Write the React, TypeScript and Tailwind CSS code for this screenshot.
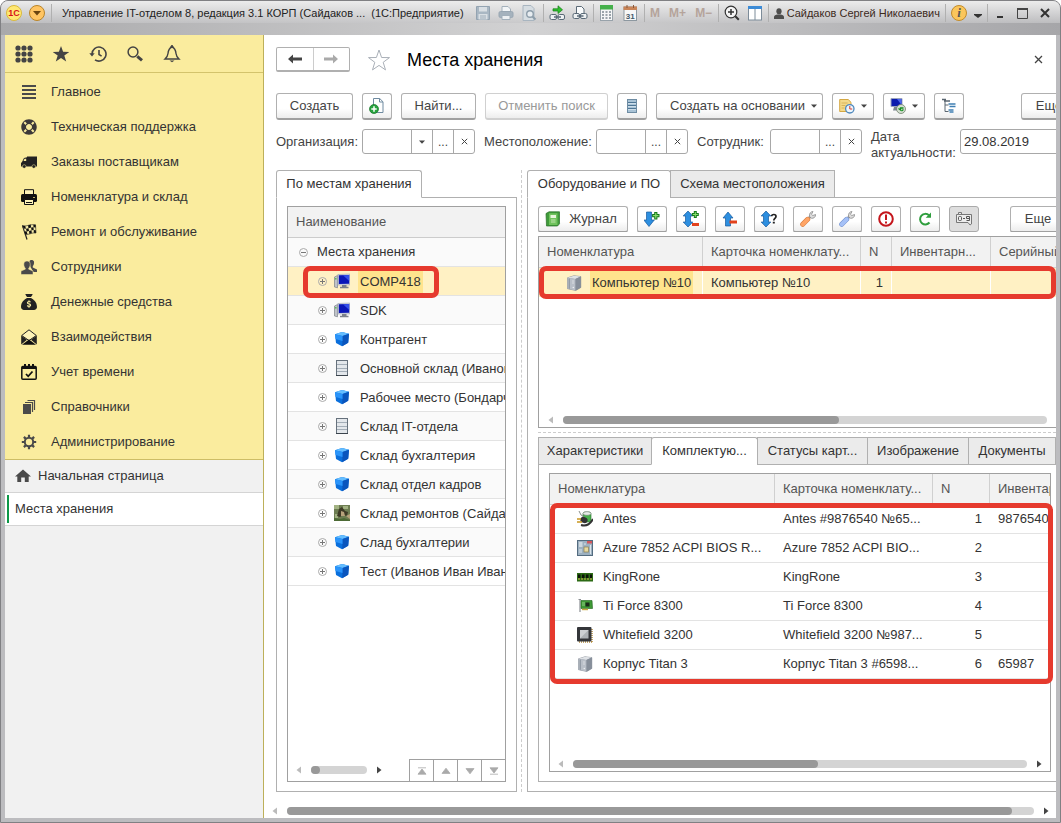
import React from "react";
import { FaLifeRing } from "react-icons/fa";
import { FaSackDollar } from "react-icons/fa6";

type Kids = { children?: React.ReactNode };

function Svg({ children, size = 16 }: Kids & { size?: number }) {
  return (
    <svg width={size} height={size} viewBox="0 0 16 16" fill="none" aria-hidden="true" className="shrink-0">
      {children}
    </svg>
  );
}

/* ---------- sidebar icons ---------- */

const GridIcon = () => (
  <svg width="18" height="18" viewBox="0 0 18 18" fill="#444" aria-hidden="true">
    {[3, 9, 15].map((y) => [3, 9, 15].map((x) => <circle key={`${x}-${y}`} cx={x} cy={y} r="2.6" />))}
  </svg>
);
const StarIcon = () => (
  <svg width="18" height="18" viewBox="0 0 18 18" fill="#444" aria-hidden="true">
    <path d="M9 1l2.1 5.8 6.2.1-5 3.7 1.9 6L9 13l-5.2 3.6 1.9-6-5-3.7 6.2-.1z" />
  </svg>
);
const HistoryIcon = () => (
  <svg width="18" height="18" viewBox="0 0 18 18" fill="none" stroke="#444" strokeWidth="1.6" aria-hidden="true">
    <path d="M3 9a7 7 0 1 1 3 5.8" />
    <path d="M.3 8.2h5.4L3 11.6z" fill="#444" stroke="none" />
    <path d="M10 5v4.5l2.6 1.6" />
  </svg>
);
const SearchIcon = () => (
  <svg width="18" height="18" viewBox="0 0 18 18" fill="none" stroke="#444" aria-hidden="true">
    <circle cx="7" cy="7" r="4.9" strokeWidth="1.5" />
    <path d="M11.3 11.3l4.7 4" strokeWidth="3" />
  </svg>
);
const BellIcon = () => (
  <svg width="18" height="18" viewBox="0 0 18 18" fill="none" stroke="#444" strokeWidth="1.4" aria-hidden="true">
    <path d="M9 2c-3 1-3.7 3.5-4 6.500-.2 2.500-1.200 3.800-3 5.500h14c-1.800-1.700-2.800-3-3-5.500-.3-3-1-5.500-4-6.500z" />
    <path d="M8 2l1-1.500L10 2z" fill="#444" />
    <path d="M6.500 15.500h5L9 17.300z" fill="#444" stroke="none" />
  </svg>
);

const MenuIcon = () => (
  <Svg>
    <path d="M1 2h14M1 6h14M1 10h14M1 14h14" stroke="#4a4a4a" strokeWidth="1.800" />
  </Svg>
);
const VanIcon = () => (
  <Svg>
    <path d="M6 2.500h10V12.500H0V9l1-1L3 4l3-.8z" fill="#222" />
    <path d="M3.500 4.800H5.200v2.200H2.500z" fill="#faec9e" />
    <circle cx="3.200" cy="12.500" r="1.800" fill="#222" stroke="#faec9e" strokeWidth=".5" />
    <circle cx="12.800" cy="12.500" r="1.800" fill="#222" stroke="#faec9e" strokeWidth=".5" />
  </Svg>
);
const PrinterIcon = () => (
  <Svg>
    <path d="M3.500 6V.7h9V6" fill="#fdf3b8" stroke="#111" />
    <rect x="0" y="5" width="16" height="8" rx="1.500" fill="#111" />
    <path d="M3.500 10.500h9v5h-9z" fill="#fdf3b8" stroke="#111" />
    <path d="M5 13.500h6" stroke="#111" />
    <path d="M12 8.500h2" stroke="#bfb06a" />
  </Svg>
);
const FlagIcon = () => (
  <Svg>
    <path d="M1.500 1.500L6 15.500" stroke="#222" strokeWidth="1.200" />
    <path d="M1.500 1.500C5 3 8 0 14.500.8L15 9c-4-1-7 2.500-10.500 1z" fill="#f6eba6" stroke="#222" strokeWidth=".6" />
    <path d="M1.700 1.700l2.500.3.8 2.700-2.400-.3zM7 1.500l2.700-.9.4 2.800-2.600.9zM12.300.7h2.300l.1 2.700-2.200-.1zM5 4.700l2.500-.4.5 2.700-2.300.6zM10.100 3.400l2.400-.1.200 2.800-2.200.2zM3.400 7.200l2.300.4.8 2.800-2.200-.2zM8 7l2.500-.7.3 2.700-2.400.9zM12.700 6.100l2.100.1.200 2.700-2.200-.2z" fill="#111" />
  </Svg>
);
const PeopleIcon = () => (
  <Svg>
    <path d="M8.500 2C9 .5 12.500.4 13 2.500c.2 2-.2 3.500-1.200 4.500v1.500l4.200 2V13h-3.500l-3-5z" fill="#4a4a4a" />
    <path d="M2.800 5C2.800 1 9.200 1 9.200 5c0 2-.7 3.500-1.500 4.300v.9L12 12v3.500H0V12l4.300-1.800v-.9C3.500 8.500 2.800 7 2.800 5z" fill="#4a4a4a" stroke="#faec9e" strokeWidth=".5" />
  </Svg>
);
const MailIcon = () => (
  <Svg>
    <path d="M.7 6.500L8 .8l7.300 5.700L8 11.500z" fill="#fdf3b8" stroke="#222" />
    <path d="M.2 6.500v9L6 10.800zM15.800 6.500v9L10 10.800z" fill="#222" />
    <path d="M1 15.800L8 10.600l7 5.200z" fill="#111" />
  </Svg>
);
const CalendarIcon = () => (
  <Svg>
    <rect x=".8" y="2.500" width="14.400" height="12.700" rx="1" stroke="#111" strokeWidth="1.500" />
    <path d="M1 2h14v3H1z" fill="#111" />
    <path d="M4 0v3.500M8 0v2M12 0v3.500" stroke="#111" strokeWidth="2" />
    <path d="M5 10l2.200 2.300L11.500 7.500" stroke="#111" strokeWidth="1.800" />
  </Svg>
);
const BooksIcon = () => (
  <Svg>
    <rect x="2" y="5" width="8" height="10" fill="#4a4a4a" />
    <path d="M4 3.500h7.500V13M6.500 1.500h7V11" stroke="#4a4a4a" strokeWidth="1.200" />
  </Svg>
);
const GearIcon = () => (
  <Svg>
    <circle cx="8" cy="8" r="4.200" stroke="#4a4a4a" strokeWidth="2" />
    <path d="M8 .8v3M8 12.200v3M.8 8h3M12.200 8h3M2.900 2.900l2.200 2.200M10.900 10.900l2.200 2.200M2.900 13.100l2.200-2.200M10.900 5.100l2.200-2.200" stroke="#4a4a4a" strokeWidth="2.200" />
  </Svg>
);
const HomeIcon = () => (
  <Svg>
    <path d="M8 1.500L16 8.500h-2.300V14H9.800V9.500H6.200V14H2.300V8.500H0z" fill="#4a4a4a" />
  </Svg>
);

/* ---------- content icons ---------- */

const ComputerIcon = () => (
  <Svg>
    <path d="M.5 4L3.500 2.500v12.300L.5 14z" fill="#bfc3c9" stroke="#7d828a" strokeWidth=".7" />
    <rect x="1.200" y="5" width="1.200" height="1.500" fill="#3fbf3f" />
    <path d="M3.800 1.500L15.800 1v11L3.800 12z" fill="#d5d9e2" stroke="#8e95a5" strokeWidth=".5" />
    <path d="M4.800 2.300L15.200 2v8.700L4.800 11z" fill="#0a16b8" />
    <path d="M9 2.200L15.200 2v6z" fill="#3450ea" />
    <path d="M8 12h4.500v1.700h2v1.600H6v-1.600h2z" fill="#7b808b" />
  </Svg>
);
const BoxIcon = () => (
  <Svg>
    <path d="M1 3.200L8 1l7 1.800-.8 9L8 15.300 2 12z" fill="#0a6fdc" />
    <path d="M1 3.200L8 1l7 1.800L8.500 5z" fill="#64bdff" />
    <path d="M8.500 5L15 2.800l-.8 9L8.300 15.200z" fill="#0a55bd" />
    <path d="M1 3.200L8.500 5v5L1.600 8z" fill="#2a94fa" />
  </Svg>
);
const ShelfIcon = () => (
  <Svg>
    <rect x="2.500" y=".5" width="11" height="15" fill="#e3e7eb" stroke="#66717c" />
    <path d="M3 4.500h10M3 8.500h10M3 11.500h10" stroke="#a3adb7" />
    <path d="M2 15.500h12" stroke="#3b444d" />
  </Svg>
);
const PhotoIcon = () => (
  <Svg>
    <rect width="16" height="16" fill="#6d7d52" />
    <path d="M0 0h5v4H0zM9 1h5v3H9zM1 9h3v4H1z" fill="#a2b283" />
    <path d="M5 4l3-2 3 4 3 1-1 4-4-1-3 2-3-1z" fill="#3d3a26" />
    <path d="M7 6l3 1 1 4H7zM12 11l4-2v5z" fill="#b7a27c" />
    <path d="M0 13l6 1 4-1 6 2v1H0z" fill="#4c6a35" />
  </Svg>
);
const CaseIcon = () => (
  <Svg>
    <path d="M1.500 2.800L8 .7l6.800.9V12.500l-5 3-8.300-1.800z" fill="#8f97a2" stroke="#6f7783" strokeWidth=".5" />
    <path d="M1.500 2.800L8 .7l6.800.9L9.300 4z" fill="#dfe2e6" />
    <path d="M9.300 4l5.500-2.400v10.900l-5.500 3z" fill="#868e9a" />
    <path d="M1.500 2.800L9.300 4v11.500l-7.800-1.800z" fill="#b9bfc8" />
    <path d="M3.200 3.500v10.300" stroke="#7d8592" strokeWidth=".9" />
    <path d="M6 6h2M6 8h2" stroke="#e8eaed" strokeWidth=".7" />
    <circle cx="7.300" cy="12.500" r=".8" fill="#eef0f2" />
  </Svg>
);
const PowerIcon = () => (
  <Svg>
    <rect x="6" y="1" width="8" height="10" rx="2" fill="#49b34c" stroke="#276a2a" strokeWidth=".6" />
    <ellipse cx="10" cy="2.500" rx="4" ry="1.800" fill="#e6ebe6" stroke="#6c716c" strokeWidth=".5" />
    <path d="M2 0l2 4 3 1.500" stroke="#8a8f8a" strokeWidth="1" />
    <ellipse cx="7" cy="9" rx="3.700" ry="3" fill="#333" transform="rotate(20 7 9)" />
    <path d="M0 8h4M0 11h5" stroke="#c9971f" strokeWidth="1.300" />
    <path d="M4 14c5 1.500 9-.5 12-6" stroke="#333" strokeWidth="2" />
  </Svg>
);
const BoardIcon = () => (
  <Svg>
    <rect x=".5" y=".5" width="15" height="15" fill="#9db1c1" stroke="#546c80" />
    <rect x="2" y="2" width="3.500" height="5" fill="#cdd8e0" />
    <rect x="10" y="1" width="5" height="2.500" fill="#d3575c" />
    <rect x="7" y="7" width="4.500" height="5" fill="#e7d9a0" stroke="#8b7d4d" strokeWidth=".7" />
    <path d="M2 10h3M2 12h3M13.500 5v9M8 3v2" stroke="#dbe4ea" />
  </Svg>
);
const RamIcon = () => (
  <Svg>
    <rect y="4" width="16" height="8.500" fill="#2c6a15" />
    <path d="M1 5.500h2.500V9H1zM5 5.500h2.500V9H5zM9 5.500h2.500V9H9zM13 5.500h2V9h-2z" fill="#0c1408" />
    <path d="M1 10h14" stroke="#d7bd52" strokeDasharray="2 1" />
  </Svg>
);
const CardIcon = () => (
  <Svg>
    <path d="M3 1v13M1.500 1.500H4" stroke="#8b8f94" strokeWidth="1.200" />
    <path d="M4 2.500h11l.5 8H4z" fill="#3f9a35" stroke="#1f611c" strokeWidth=".6" />
    <rect x="8.500" y="4.500" width="4" height="4" fill="#1b2b1a" />
    <path d="M5 10.700h6V12.200H5z" fill="#c5a63c" />
    <path d="M5 5h3M5 7h3" stroke="#8fd085" />
  </Svg>
);
const CpuIcon = () => (
  <Svg>
    <path d="M15 2v13M2 15h13" stroke="#b28a3a" strokeWidth="1.500" strokeDasharray="1 1" />
    <rect x="0" y="0" width="14.500" height="14.500" rx="1" fill="#34363a" />
    <rect x="3" y="3" width="8.500" height="8.500" fill="#aeb2b6" />
    <path d="M3 3h8.500L3 11.500z" fill="#cdd0d3" />
  </Svg>
);

const NewDocIcon = () => (
  <Svg>
    <path d="M4.500.5h6.200l3.300 3.300V14.500H4.500z" fill="#fdfefe" stroke="#6f8aa0" />
    <path d="M10.500.5V4H14" stroke="#6f8aa0" />
    <circle cx="5" cy="11" r="4.500" fill="#27a33f" stroke="#147326" strokeWidth=".7" />
    <path d="M5 8.300v5.400M2.300 11h5.400" stroke="#fff" strokeWidth="1.500" />
  </Svg>
);
const ListIcon = () => (
  <Svg>
    <rect x="3.500" y="1.500" width="9" height="13" fill="#a9c3d6" stroke="#6e8ca3" />
    <path d="M4 4.500h8M4 7.500h8M4 10.500h8" stroke="#4f7796" strokeWidth="1" />
    <path d="M4 5.500h8M4 8.500h8M4 11.500h8" stroke="#dce9f2" strokeWidth=".7" />
  </Svg>
);
const DocClockIcon = () => (
  <Svg>
    <path d="M.7 1.500h8.500L12 4.300v9.200H.7z" fill="#f4d98b" stroke="#d4a844" />
    <path d="M2.500 5h6M2.500 7.500h4M2.500 10h3" stroke="#d8b45a" />
    <circle cx="10.800" cy="10.800" r="4.200" fill="#eef6fc" stroke="#4e88bd" strokeWidth="1.300" />
    <path d="M10.800 8v3h2.400" stroke="#d63a2d" />
  </Svg>
);
const PcSyncIcon = () => (
  <Svg>
    <path d="M1 .5h11v8H1z" fill="#0c1cae" stroke="#9aa3bd" />
    <path d="M7 1h4.500v6z" fill="#4c66ee" />
    <path d="M4 9h5l1 3.500H3z" fill="#7d8591" />
    <circle cx="11" cy="11" r="4.500" fill="#d5dfd2" stroke="#71806d" strokeWidth=".8" />
    <path d="M8.500 10.500l2 1.500v-2h3M13.500 11.500l-2 1.500" stroke="#159020" strokeWidth="1.300" />
  </Svg>
);
const TreeIcon = () => (
  <Svg>
    <path d="M4 3v10.500h3.500M4 7h3.500" stroke="#5a6670" />
    <path d="M1 1.500h4M3 3h6" stroke="#5a6670" strokeWidth="1.500" />
    <path d="M7.500 6h7M8.500 8.500h6M7.500 12h5M8.500 14h4" stroke="#3f7fb3" strokeWidth="1.600" />
  </Svg>
);
const JournalIcon = () => (
  <Svg>
    <path d="M1 2.500L4 .8h10.500v12L12.500 15H1.500z" fill="#3f9b3a" stroke="#2a6f28" strokeWidth=".7" />
    <path d="M4 2.300h8.500V14H4z" fill="#6fc25c" />
    <path d="M5.500 4h5.500v3H5.500z" fill="#e9f5dd" />
    <path d="M6 9h4.500M6 11h4.500" stroke="#c3e5b0" />
  </Svg>
);
const BLUE = "#2d8fe0";
const AddDownIcon = () => (
  <Svg>
    <path d="M2.500 1h5v8h2.800L5 15.500-.2 9h2.700z" fill={BLUE} stroke="#17599c" strokeWidth=".7" />
    <path d="M11.800 1v7.400M8.100 4.700h7.400" stroke="#157a1b" strokeWidth="3.200" />
    <path d="M11.800 2v5.400M9.100 4.700h5.400" stroke="#8be06f" strokeWidth="1.200" />
  </Svg>
);
const UpDown = () => <path d="M5 0l4.800 5H7.500v6h2.300L5 16 .2 11h2.300V5H.2z" fill={BLUE} stroke="#17599c" strokeWidth=".7" />;
const AddRemoveIcon = () => (
  <Svg>
    <UpDown />
    <path d="M12.300 0v7M8.800 3.500h7" stroke="#157a1b" strokeWidth="3" />
    <path d="M12.300 1v5M9.800 3.500h5" stroke="#8be06f" />
    <path d="M9 13.500h7" stroke="#e2421d" strokeWidth="3" />
  </Svg>
);
const RemoveUpIcon = () => (
  <Svg>
    <path d="M6 1l5 6H8.500v8h-5V7H1z" fill={BLUE} stroke="#17599c" strokeWidth=".7" />
    <path d="M7.500 11h7.500" stroke="#e2421d" strokeWidth="3.200" />
  </Svg>
);
const QuestionIcon = () => (
  <Svg>
    <UpDown />
    <path d="M10.700 5.200c0-2.300 4.300-2.300 4.300.2 0 2-2.200 1.800-2.200 4" stroke="#222" strokeWidth="1.700" />
    <path d="M11.800 10.800h2v1.800h-2z" fill="#222" />
  </Svg>
);
const Wrench = ({ color, edge }: { color: string; edge: string }) => (
  <Svg>
    <path d="M7 9l4-4" stroke="#999" strokeWidth="2.500" />
    <path d="M9.500 5.500C9 3 10.500.5 13 .5l-1.500 2.800 1.300 1.200 2.800-1c.2 2.500-2 4.300-4.300 3.700z" fill="#dcdcdc" stroke="#8b8b8b" strokeWidth=".8" />
    <path d="M2.700 13.300l5-5" stroke={edge} strokeWidth="5" strokeLinecap="round" />
    <path d="M2.700 13.300l5-5" stroke={color} strokeWidth="3.800" strokeLinecap="round" />
  </Svg>
);
const AlertIcon = () => (
  <Svg>
    <circle cx="8" cy="8" r="6.800" fill="#fff" stroke="#c4161c" strokeWidth="2" />
    <path d="M8 3.500v5.500M8 10.500v2" stroke="#c4161c" strokeWidth="2" />
  </Svg>
);
const RefreshIcon = () => (
  <Svg>
    <path d="M12.500 11.500A5.300 5.300 0 1 1 12 4.300" stroke="#2e9e3d" strokeWidth="2" />
    <path d="M14 1.500v5.300H8.700z" fill="#2e9e3d" />
  </Svg>
);
const NumbersIcon = () => (
  <svg width="18" height="16" viewBox="0 0 18 16" fill="none" aria-hidden="true">
    <path d="M3.500 3.500v-2h3v2M3.500 3.500h-2v8h11.500l2 2.500 1.500-1V3.500z" fill="#ececec" stroke="#777" />
    <rect x="3.500" y="5.500" width="3" height="4" rx="1" stroke="#555" />
    <path d="M8 7.500h2M14.500 7.500h-3v-2h3v4h-3" stroke="#555" />
  </svg>
);

/* ---------- title bar icons ---------- */

const SaveIcon = () => (
  <Svg>
    <path d="M1.500 1.500h13v13h-13z" fill="#a9b7c3" stroke="#93a3b1" />
    <path d="M4 2h8v4.500H4zM3.500 9h9v5.500h-9z" fill="#d9dfe4" />
    <path d="M5 11h6M5 13h6" stroke="#9fadb9" />
  </Svg>
);
const PrintSmall = ({ on = false }: { on?: boolean }) => (
  <Svg>
    <path d="M4 7V1.500h6L12.500 4v3" fill="#f2f5f7" stroke={on ? "#5c6c79" : "#a3b0bb"} />
    <rect x="1" y="6.500" width="14" height="6" rx="1.500" fill={on ? "#dfe5e9" : "#a5b2bd"} stroke={on ? "#52606b" : "#98a6b2"} />
    <path d="M4 10.500h8v4H4z" fill="#edf0f2" stroke={on ? "#52606b" : "#a3b0bb"} />
  </Svg>
);
const PreviewIcon = () => (
  <Svg>
    <path d="M2 .5h8l3 3v12H2z" fill="#d6dde2" stroke="#a8b5c0" />
    <circle cx="9" cy="9" r="3.300" fill="#e8edf1" stroke="#8d9daa" strokeWidth="1.400" />
    <path d="M11.500 11.500l3 3" stroke="#8d9daa" strokeWidth="2" />
  </Svg>
);
const LinkArrowIcon = () => (
  <Svg>
    <path d="M4 3.800h5V.8l4.500 4L9 8.500V6H4z" fill="#2fc02f" stroke="#157d18" strokeWidth=".7" />
    <rect x="1" y="9.500" width="6.500" height="5" rx="1.500" fill="#eef1f3" stroke="#5a6a77" />
    <rect x="9" y="9.500" width="6.500" height="5" rx="1.500" fill="#eef1f3" stroke="#5a6a77" />
    <path d="M5 12h7" stroke="#5a6a77" strokeWidth="1.300" />
  </Svg>
);
const LinkPageIcon = () => (
  <Svg>
    <path d="M4.500 9V1.500h5l2.500 2.500v5" fill="#fafbfc" stroke="#5a6a77" />
    <rect x="1" y="8.500" width="6.500" height="5" rx="1.500" fill="#eef1f3" stroke="#5a6a77" />
    <rect x="8.500" y="8.500" width="6.500" height="5" rx="1.500" fill="#eef1f3" stroke="#5a6a77" />
    <path d="M5 11h6.500" stroke="#5a6a77" strokeWidth="1.300" />
  </Svg>
);
const CalcIcon = () => (
  <Svg>
    <rect x="2.500" y=".5" width="12" height="15" fill="#f5f6f7" stroke="#98a2aa" />
    <path d="M2 0h13v4.500H2z" fill="#45b04b" />
    <path d="M4 7h9M4 10h9M4 13h9" stroke="#7d8993" strokeWidth="1.700" strokeDasharray="2 1.500" />
  </Svg>
);
const DateIcon = () => (
  <Svg>
    <rect x="2" y="2" width="12.500" height="13.500" fill="#f7f7f7" stroke="#8d98a0" />
    <path d="M1.500 1.500H15V5H1.500z" fill="#c98458" />
    <path d="M5 0v3M11.500 0v3" stroke="#8b5938" />
    <text x="8.200" y="13.500" fontSize="8" fontFamily="Liberation Sans, sans-serif" fontWeight="bold" textAnchor="middle" fill="#44596a">31</text>
  </Svg>
);
const ZoomIcon = () => (
  <Svg>
    <circle cx="7" cy="7" r="5.800" fill="#f5f5f5" stroke="#333" strokeWidth="1.200" />
    <path d="M7 4v6M4 7h6" stroke="#333" strokeWidth="1.500" />
    <path d="M11.300 11.300l3.500 3.500" stroke="#333" strokeWidth="2" />
  </Svg>
);
const PanesIcon = () => (
  <Svg>
    <rect x="1.500" y="1.500" width="13" height="13.500" fill="#fff" stroke="#7d8c99" />
    <path d="M1 1h14v3H1z" fill="#3c8bd6" />
    <path d="M8 4v11" stroke="#7d8c99" />
  </Svg>
);
const UserIcon = () => (
  <svg width="10" height="11" viewBox="0 0 11 12" fill="#4d4d4d" aria-hidden="true">
    <ellipse cx="5.500" cy="3.500" rx="2.900" ry="3.400" />
    <path d="M0 12V9.500c0-1 2-2 3.800-2.300h3.400C9 7.500 11 8.500 11 9.500V12z" />
  </svg>
);

/* ---------- building blocks ---------- */

const BTN =
  "flex h-[27px] shrink-0 items-center justify-center whitespace-nowrap rounded-[3px] border border-[#b0b0b0] border-b-2 border-b-[#a0a0a0] bg-gradient-to-b from-white from-60% to-[#ededed] text-[#444]";

function Button({ children, className, label, disabled }: Kids & { className: string; label?: string; disabled?: boolean }) {
  return (
    <button type="button" aria-label={label} disabled={disabled} className={`${BTN} ${className} disabled:border-[#d0d0d0] disabled:text-[#999]`}>
      {children}
    </button>
  );
}

const Caret = () => (
  <svg width="6" height="4" viewBox="0 0 6 4" className="shrink-0" aria-hidden="true">
    <path d="M0 .5h6L3 3.800z" fill="#444" />
  </svg>
);
const CrossMark = ({ size = 7 }: { size?: number }) => (
  <svg width={size} height={size} viewBox="0 0 7 7" aria-hidden="true">
    <path d="M.8.8l5.400 5.400M6.200.8L.8 6.200" stroke="#444" strokeWidth="1" />
  </svg>
);

function Field({ id, label, labelClass, dropdown }: { id: string; label: string; labelClass: string; dropdown?: boolean }) {
  const cell = "flex w-[21px] items-center justify-center border-l border-[#a8a8a8] text-xs text-[#444]";
  return (
    <div className="flex shrink-0">
      <label htmlFor={id} className={`flex h-[25px] shrink-0 items-center ${labelClass}`}>{label}</label>
      <div className="flex h-[25px] rounded-[3px] border border-[#a8a8a8] bg-white">
        <input id={id} className="w-[48px] bg-transparent px-1 outline-none" />
        {dropdown && <button type="button" aria-label="Открыть список" className={cell}><Caret /></button>}
        <button type="button" aria-label="Выбрать" className={cell}>...</button>
        <button type="button" aria-label="Очистить" className={cell}><CrossMark /></button>
      </div>
    </div>
  );
}

function Tab({ active, className, children }: Kids & { active?: boolean; className: string }) {
  return (
    <button
      type="button"
      role="tab"
      aria-selected={!!active}
      className={`-ml-px h-7 shrink-0 whitespace-nowrap border border-[#b0b0b0] text-[#333] first:ml-0 ${active ? "rounded-t-[3px] border-b-white bg-white" : "bg-[#ebebeb]"} ${className}`}
    >
      {children}
    </button>
  );
}

const ArrowH = ({ right, dark }: { right?: boolean; dark?: boolean }) => (
  <svg width="5" height="8" viewBox="0 0 5 8" className="shrink-0" aria-hidden="true">
    <path d={right ? "M0 .5v7L4.500 4z" : "M5 .5v7L.5 4z"} fill={dark ? "#444" : "#bbb"} />
  </svg>
);

function ScrollBar({ className, thumb, noRight }: { className: string; thumb: string; noRight?: boolean }) {
  return (
    <div className={`flex items-center gap-[10px] ${className}`}>
      <ArrowH />
      <div className="h-2 flex-1 rounded-full bg-[#d4d4d4]">
        <div className={`h-2 rounded-full bg-[#999] ${thumb}`} />
      </div>
      {!noRight && <ArrowH right dark />}
    </div>
  );
}

const Expander = ({ open }: { open?: boolean }) => (
  <svg width="9" height="9" viewBox="0 0 9 9" fill="none" stroke="#aaa" className="shrink-0" aria-hidden="true">
    <circle cx="4.500" cy="4.500" r="4" />
    <path d="M2 4.500h5" stroke="#777" />
    {!open && <path d="M4.500 2v5" stroke="#777" />}
  </svg>
);

const Sep = () => <span className="h-[18px] w-px shrink-0 bg-[#b0b0b0]" />;
const redFrame = "pointer-events-none absolute rounded-[7px] border-[5px] border-[#e63a2e]";

/* ---------- data ---------- */

const menu: [React.ReactNode, string][] = [
  [<MenuIcon />, "Главное"],
  [<FaLifeRing size={16} color="#3c3838" />, "Техническая поддержка"],
  [<VanIcon />, "Заказы поставщикам"],
  [<PrinterIcon />, "Номенклатура и склад"],
  [<FlagIcon />, "Ремонт и обслуживание"],
  [<PeopleIcon />, "Сотрудники"],
  [<FaSackDollar size={16} />, "Денежные средства"],
  [<MailIcon />, "Взаимодействия"],
  [<CalendarIcon />, "Учет времени"],
  [<BooksIcon />, "Справочники"],
  [<GearIcon />, "Администрирование"],
];

const tree: [React.ReactNode, string][] = [
  [<ComputerIcon />, "COMP418"],
  [<ComputerIcon />, "SDK"],
  [<BoxIcon />, "Контрагент"],
  [<ShelfIcon />, "Основной склад (Иванов)"],
  [<BoxIcon />, "Рабочее место (Бондарчук)"],
  [<ShelfIcon />, "Склад IT-отдела"],
  [<BoxIcon />, "Склад бухгалтерия"],
  [<BoxIcon />, "Склад отдел кадров"],
  [<PhotoIcon />, "Склад ремонтов (Сайдаков)"],
  [<BoxIcon />, "Слад бухгалтерии"],
  [<BoxIcon />, "Тест (Иванов Иван Иванович)"],
];

const parts: [React.ReactNode, string, string, string][] = [
  [<PowerIcon />, "Antes", "Antes #9876540 №65...", "9876540"],
  [<BoardIcon />, "Azure 7852 ACPI BIOS R...", "Azure 7852 ACPI BIO...", ""],
  [<RamIcon />, "KingRone", "KingRone", ""],
  [<CardIcon />, "Ti Force 8300", "Ti Force 8300", ""],
  [<CpuIcon />, "Whitefield 3200", "Whitefield 3200 №987...", ""],
  [<CaseIcon />, "Корпус Titan 3", "Корпус Titan 3 #6598...", "65987"],
];

const TH = "h-[31px] overflow-hidden whitespace-nowrap border-b border-r border-[#d0d0d0] bg-[#f2f2f2] px-2 text-left font-normal text-[#555] last:border-r-0";

/* ---------- sections ---------- */

function TitleBar() {
  return (
    <header className="flex h-[34px] shrink-0 items-start bg-gradient-to-r from-[#a9a9ab] via-[#d2d2d3] to-[#a6a6a9]">
      <div className="flex h-[22px] min-w-0 flex-1 items-center bg-gradient-to-b from-[#ececec] to-[#c6c6c8]/70 pl-[5px] pr-[10px] pt-[2px] text-[11px] text-[#222]">
        <span className="flex size-4 shrink-0 items-center justify-center rounded-full border border-[#d9b93c] bg-[#ffe873] text-[9px] font-bold text-[#d8131b]">1C</span>
        <button type="button" aria-label="Главное меню" className="ml-[7px] flex size-4 shrink-0 items-center justify-center rounded-full border border-[#b98428] bg-[#ffc563]">
          <svg width="8" height="5" viewBox="0 0 8 5" aria-hidden="true"><path d="M0 0h8L4 4.500z" fill="#6b4510" /></svg>
        </button>
        <span className="ml-[6px] flex"><Sep /></span>
        <span className="ml-[10px] whitespace-pre">Управление IT-отделом 8, редакция 3.1 КОРП (Сайдаков ...  (1С:Предприятие)</span>
        <div className="ml-auto flex shrink-0 items-center">
          <div className="flex items-center gap-[7px] pr-[6px]"><SaveIcon /><PrintSmall /><PreviewIcon /></div>
          <Sep />
          <div className="flex items-center gap-[7px] px-[5px]"><LinkArrowIcon /><LinkPageIcon /></div>
          <Sep />
          <div className="flex items-center gap-2 pl-1 pr-[6px]"><CalcIcon /><DateIcon /></div>
          <Sep />
          <div className="flex w-[73px] items-center justify-center gap-[9px] text-xs font-bold text-[#b5a49b]"><span>M</span><span>M+</span><span>M−</span></div>
          <Sep />
          <div className="flex items-center gap-[7px] px-[5px]"><ZoomIcon /><PanesIcon /></div>
          <Sep />
          <div className="flex items-center gap-[3px] px-[5px] text-[#3c2a1c]"><UserIcon /><span>Сайдаков Сергей Николаевич</span></div>
          <Sep />
          <div className="flex items-center gap-[7px] px-[5px]">
            <span className="flex size-4 items-center justify-center rounded-full border border-[#c28b2a] bg-[#fbc65b] font-['Liberation_Serif',serif] text-[13px] font-bold italic text-[#555]">i</span>
            <svg width="8" height="12" viewBox="0 0 8 12" aria-hidden="true"><path d="M0 7h8v1L4 11 0 8z" fill="#333" /></svg>
          </div>
          <Sep />
          <div className="flex items-center gap-3 pl-2">
            <svg width="9" height="12" viewBox="0 0 9 12" aria-hidden="true"><path d="M1 10h6" stroke="#333" strokeWidth="2" /></svg>
            <svg width="11" height="11" viewBox="0 0 11 11" fill="none" aria-hidden="true"><path d="M.5 1h10v9.500H.5z" stroke="#444" /><path d="M0 1h11" stroke="#444" strokeWidth="2" /></svg>
            <svg width="10" height="10" viewBox="0 0 10 10" aria-hidden="true"><path d="M1 1l8 8M9 1L1 9" stroke="#333" strokeWidth="2" /></svg>
          </div>
        </div>
      </div>
    </header>
  );
}

function Sidebar() {
  return (
    <aside className="flex w-[259px] shrink-0 flex-col border-r border-[#bdb05a] bg-[#f1f1f1]">
      <div className="flex h-[38px] shrink-0 items-center gap-[19px] border-b border-[#d3c36c] bg-[#faec9e] pl-[10px]">
        <GridIcon /><StarIcon /><HistoryIcon /><SearchIcon /><BellIcon />
      </div>
      <nav className="border-b border-[#cdbd66] bg-[#faec9e] pt-px">
        {menu.map(([icon, text]) => (
          <a key={text} href="#" className="flex h-[35px] items-center text-[#333]">
            <span className="ml-4 flex w-[30px] shrink-0 items-center text-[#222]">{icon}</span>
            {text}
          </a>
        ))}
      </nav>
      <a href="#" className="flex h-[33px] shrink-0 items-center gap-[7px] border-b border-[#d4d4d4] pl-[10px] text-[#333]">
        <HomeIcon />Начальная страница
      </a>
      <a href="#" className="flex h-[33px] shrink-0 items-center border-b border-[#d4d4d4] bg-white pl-[2px] text-[#333]">
        <span className="mr-[6px] h-7 w-[2px] bg-[#0b9747]" />Места хранения
      </a>
    </aside>
  );
}

function TreePanel() {
  const nav = ["M1 1h10M6 2.500L11 9H1z", "M6 1.500L11 8H1z", "M1 2h10L6 8.500z", "M1 1h10L6 7.500zM1 9h10"];
  return (
    <section className="flex w-[241px] shrink-0 flex-col">
      <div role="tablist" className="relative z-10 -mb-px flex">
        <Tab active className="w-[146px]">По местам хранения</Tab>
      </div>
      <div className="flex flex-1 flex-col border border-[#b0b0b0] px-[10px] pb-[9px] pt-2">
        <div className="relative flex flex-1 flex-col border border-[#a0a0a0]">
          <div className="overflow-hidden">
            <div className="flex h-[31px] items-center border-b border-[#ccc] bg-[#f2f2f2] pl-2 text-[#555]">Наименование</div>
            <div className="flex h-[29px] items-center gap-[9px] border-b border-[#e3e3e3] bg-[#fafafa] pl-[11px] text-[#333]">
              <Expander open />Места хранения
            </div>
            {tree.map(([icon, text], i) => (
              <div key={text} className={`flex h-[29px] items-center whitespace-nowrap border-b border-[#e3e3e3] pl-[30px] text-[#333] ${i === 0 ? "bg-[#fff1c4]" : i % 2 ? "bg-[#fafafa]" : "bg-white"}`}>
                <Expander />
                <span className="ml-[7px] mr-2">{icon}</span>
                <span className={`px-[2px] leading-[27px] ${i === 0 ? "bg-[#ffe48d]" : ""}`}>{text}</span>
              </div>
            ))}
          </div>
          <div className="mt-auto flex h-[22px] items-center justify-between">
            <ScrollBar className="ml-2 w-[86px]" thumb="w-[9px]" />
            <div className="flex h-[22px] border-t border-[#a0a0a0]">
              {nav.map((d, i) => (
                <button key={d} type="button" aria-label={`Переход ${i + 1}`} className="flex w-6 items-center justify-center border-l border-[#a0a0a0]">
                  <svg width="10" height="8" viewBox="0 0 12 10" fill="#aaa" stroke="#aaa" aria-hidden="true"><path d={d} /></svg>
                </button>
              ))}
            </div>
          </div>
          <div className={`${redFrame} left-[15px] top-[59px] h-8 w-[136px]`} />
        </div>
      </div>
    </section>
  );
}

function EquipmentTable() {
  const td = "h-[29px] whitespace-nowrap border-r border-white px-2 last:border-r-0";
  return (
    <div className="relative flex h-[192px] shrink-0 flex-col overflow-hidden border border-r-0 border-[#a0a0a0]">
      <table className="w-full table-fixed border-separate border-spacing-0">
        <colgroup><col className="w-[164px]" /><col className="w-[158px]" /><col className="w-[31px]" /><col className="w-[99px]" /><col /></colgroup>
        <thead>
          <tr><th className={TH}>Номенклатура</th><th className={TH}>Карточка номенклату...</th><th className={TH}>N</th><th className={TH}>Инвентарн...</th><th className={TH}>Серийный</th></tr>
        </thead>
        <tbody>
          <tr className="bg-[#fff1c4] text-[#333]">
            <td className={td}>
              <span className="flex items-center gap-2 pl-[19px]"><CaseIcon /><span className="bg-[#ffe48d] px-[2px] leading-[25px]">Компьютер №10</span></span>
            </td>
            <td className={td}>Компьютер №10</td><td className={`${td} text-right`}>1</td><td className={td} /><td className={td} />
          </tr>
        </tbody>
      </table>
      <ScrollBar className="mb-[3px] ml-[9px] mr-[9px] mt-auto" thumb="w-[57%]" noRight />
      <div className={`${redFrame} inset-x-0 top-[29px] h-[33px]`} />
    </div>
  );
}

function PartsTable() {
  const td = "h-[29px] overflow-hidden whitespace-nowrap border-b border-[#e3e3e3] px-2";
  return (
    <div className="relative mr-[5px] flex flex-1 flex-col border border-[#a0a0a0]">
      <table className="w-full table-fixed border-separate border-spacing-0">
        <colgroup><col className="w-[225px]" /><col className="w-[158px]" /><col className="w-[57px]" /><col /></colgroup>
        <thead>
          <tr><th className={TH}>Номенклатура</th><th className={TH}>Карточка номенклату...</th><th className={TH}>N</th><th className={TH}>Инвентарный</th></tr>
        </thead>
        <tbody className="text-[#333]">
          {parts.map(([icon, name, card, inv], i) => (
            <tr key={name}>
              <td className={td}><span className="flex items-center gap-[10px] pl-[19px]">{icon}{name}</span></td>
              <td className={td}>{card}</td>
              <td className={`${td} text-right`}>{i + 1}</td>
              <td className={`${td} pr-0`}>{inv}</td>
            </tr>
          ))}
        </tbody>
      </table>
      <ScrollBar className="mb-[3px] ml-[8px] mr-[8px] mt-auto" thumb="w-[54%]" />
      <div className={`${redFrame} -right-[3px] left-0 top-[29px] h-[181px]`} />
    </div>
  );
}

function RightPanel() {
  const tools: [React.ReactNode, string][] = [
    [<AddDownIcon />, "Добавить"],
    [<AddRemoveIcon />, "Добавить и списать"],
    [<RemoveUpIcon />, "Списать"],
    [<QuestionIcon />, "Состояние"],
    [<Wrench color="#ffa566" edge="#d97f42" />, "Ремонт"],
    [<Wrench color="#a5c1f7" edge="#7896d2" />, "Обслуживание"],
    [<AlertIcon />, "Внимание"],
    [<RefreshIcon />, "Обновить"],
  ];
  return (
    <section className="flex min-w-0 flex-1 flex-col">
      <div role="tablist" className="relative z-10 -mb-px flex">
        <Tab active className="w-[144px]">Оборудование и ПО</Tab>
        <Tab className="w-[165px]">Схема местоположения</Tab>
      </div>
      <div className="flex min-w-0 flex-1 flex-col border border-r-0 border-[#b0b0b0] pb-[9px] pl-[10px] pt-2">
        <div className="mb-1 flex h-[26px] gap-[9px] overflow-hidden">
          <Button className="h-[26px] w-[90px] gap-2 pr-1"><JournalIcon />Журнал</Button>
          {tools.map(([icon, name]) => <Button key={name} label={name} className="h-[26px] w-[30px]">{icon}</Button>)}
          <button type="button" aria-label="Номера" aria-pressed="true" className="flex h-[26px] w-[30px] shrink-0 items-center justify-center rounded-[3px] border border-[#aaa] bg-[#dedede]"><NumbersIcon /></button>
          <Button className="ml-[22px] h-[26px] w-[70px] gap-2">Еще<Caret /></Button>
        </div>
        <EquipmentTable />
        <div className="my-1 border-t border-dashed border-[#ccc]" />
        <div role="tablist" className="relative z-10 -mb-px flex overflow-hidden">
          <Tab className="w-[114px]">Характеристики</Tab>
          <Tab active className="w-[107px]">Комплектую...</Tab>
          <Tab className="w-[111px]">Статусы карт...</Tab>
          <Tab className="w-[102px]">Изображение</Tab>
          <Tab className="w-[88px]">Документы</Tab>
        </div>
        <div className="flex flex-1 flex-col border border-r-0 border-[#b0b0b0] pb-[9px] pl-[10px] pt-2">
          <PartsTable />
        </div>
      </div>
    </section>
  );
}

export default function App() {
  return (
    <div className="flex h-screen min-h-[640px] flex-col overflow-hidden rounded-t-lg border border-[#808083] bg-[#b9b9bb] font-['Liberation_Sans',Arial,sans-serif] text-[13px] leading-4">
      <TitleBar />
      <div className="flex min-h-0 flex-1 border-x-4 border-b-4 border-[#bcbcbf]">
        <Sidebar />
        <main className="flex min-w-0 flex-1 flex-col overflow-hidden bg-white pl-3 pt-3 text-[#444]">
          <div className="flex h-[25px] shrink-0 items-center">
            <div className="flex h-[25px] w-[74px] rounded-[2px] border border-[#b0b0b0] border-b-2">
              <button type="button" aria-label="Назад" className="flex flex-1 items-center justify-center border-r border-[#ccc]">
                <svg width="14" height="10" viewBox="0 0 14 10" aria-hidden="true"><path d="M0 5l5-4.500v3h9v3H5v3z" fill="#444" /></svg>
              </button>
              <button type="button" aria-label="Вперед" className="flex flex-1 items-center justify-center">
                <svg width="14" height="10" viewBox="0 0 14 10" aria-hidden="true"><path d="M14 5L9 .5v3H0v3h9v3z" fill="#aaa" /></svg>
              </button>
            </div>
            <svg width="24" height="24" viewBox="0 0 24 24" fill="none" stroke="#aab0b8" className="ml-[17px]" aria-hidden="true">
              <path d="M12 2l2.600 7.500 7.900.1-6.300 4.700 2.300 7.600L12 17.400l-6.500 4.500 2.300-7.600L1.500 9.600l7.900-.1z" />
            </svg>
            <h1 className="ml-4 text-lg text-black">Места хранения</h1>
            <button type="button" aria-label="Закрыть" className="ml-auto mr-3 p-px"><CrossMark size={9} /></button>
          </div>
          <div className="mt-[21px] flex shrink-0 gap-[9px]">
            <Button className="w-[77px]">Создать</Button>
            <Button className="w-[30px]" label="Создать копированием"><NewDocIcon /></Button>
            <Button className="w-[75px]">Найти...</Button>
            <Button className="w-[123px]" disabled>Отменить поиск</Button>
            <Button className="w-[30px]" label="Список"><ListIcon /></Button>
            <Button className="w-[167px] gap-[6px] pl-2">Создать на основании<Caret /></Button>
            <Button className="w-[42px] gap-[6px]" label="Напоминание"><DocClockIcon /><Caret /></Button>
            <Button className="w-[42px] gap-[6px]" label="Компьютер"><PcSyncIcon /><Caret /></Button>
            <Button className="w-[30px]" label="Структура"><TreeIcon /></Button>
            <Button className="ml-12 w-[70px] gap-2">Еще<Caret /></Button>
          </div>
          <div className="mt-[9px] flex h-[25px] shrink-0 gap-[9px]">
            <Field id="org" label="Организация:" labelClass="w-[86px]" dropdown />
            <Field id="place" label="Местоположение:" labelClass="w-[112px]" />
            <Field id="person" label="Сотрудник:" labelClass="w-[73px]" />
            <div className="flex shrink-0">
              <label htmlFor="date" className="w-[89px] shrink-0">Дата актуальности:</label>
              <input id="date" defaultValue="29.08.2019" className="h-[25px] w-[120px] rounded-[3px] border border-[#a8a8a8] px-[3px] text-[#333] outline-none" />
            </div>
          </div>
          <div className="mt-4 flex min-h-0 flex-1">
            <TreePanel />
            <div className="ml-1 mr-[5px] w-px border-l border-dashed border-[#ccc]" />
            <RightPanel />
          </div>
          <ScrollBar className="-ml-1 mr-[7px] h-[26px] shrink-0 pt-3" thumb="w-[97%]" />
        </main>
      </div>
    </div>
  );
}
